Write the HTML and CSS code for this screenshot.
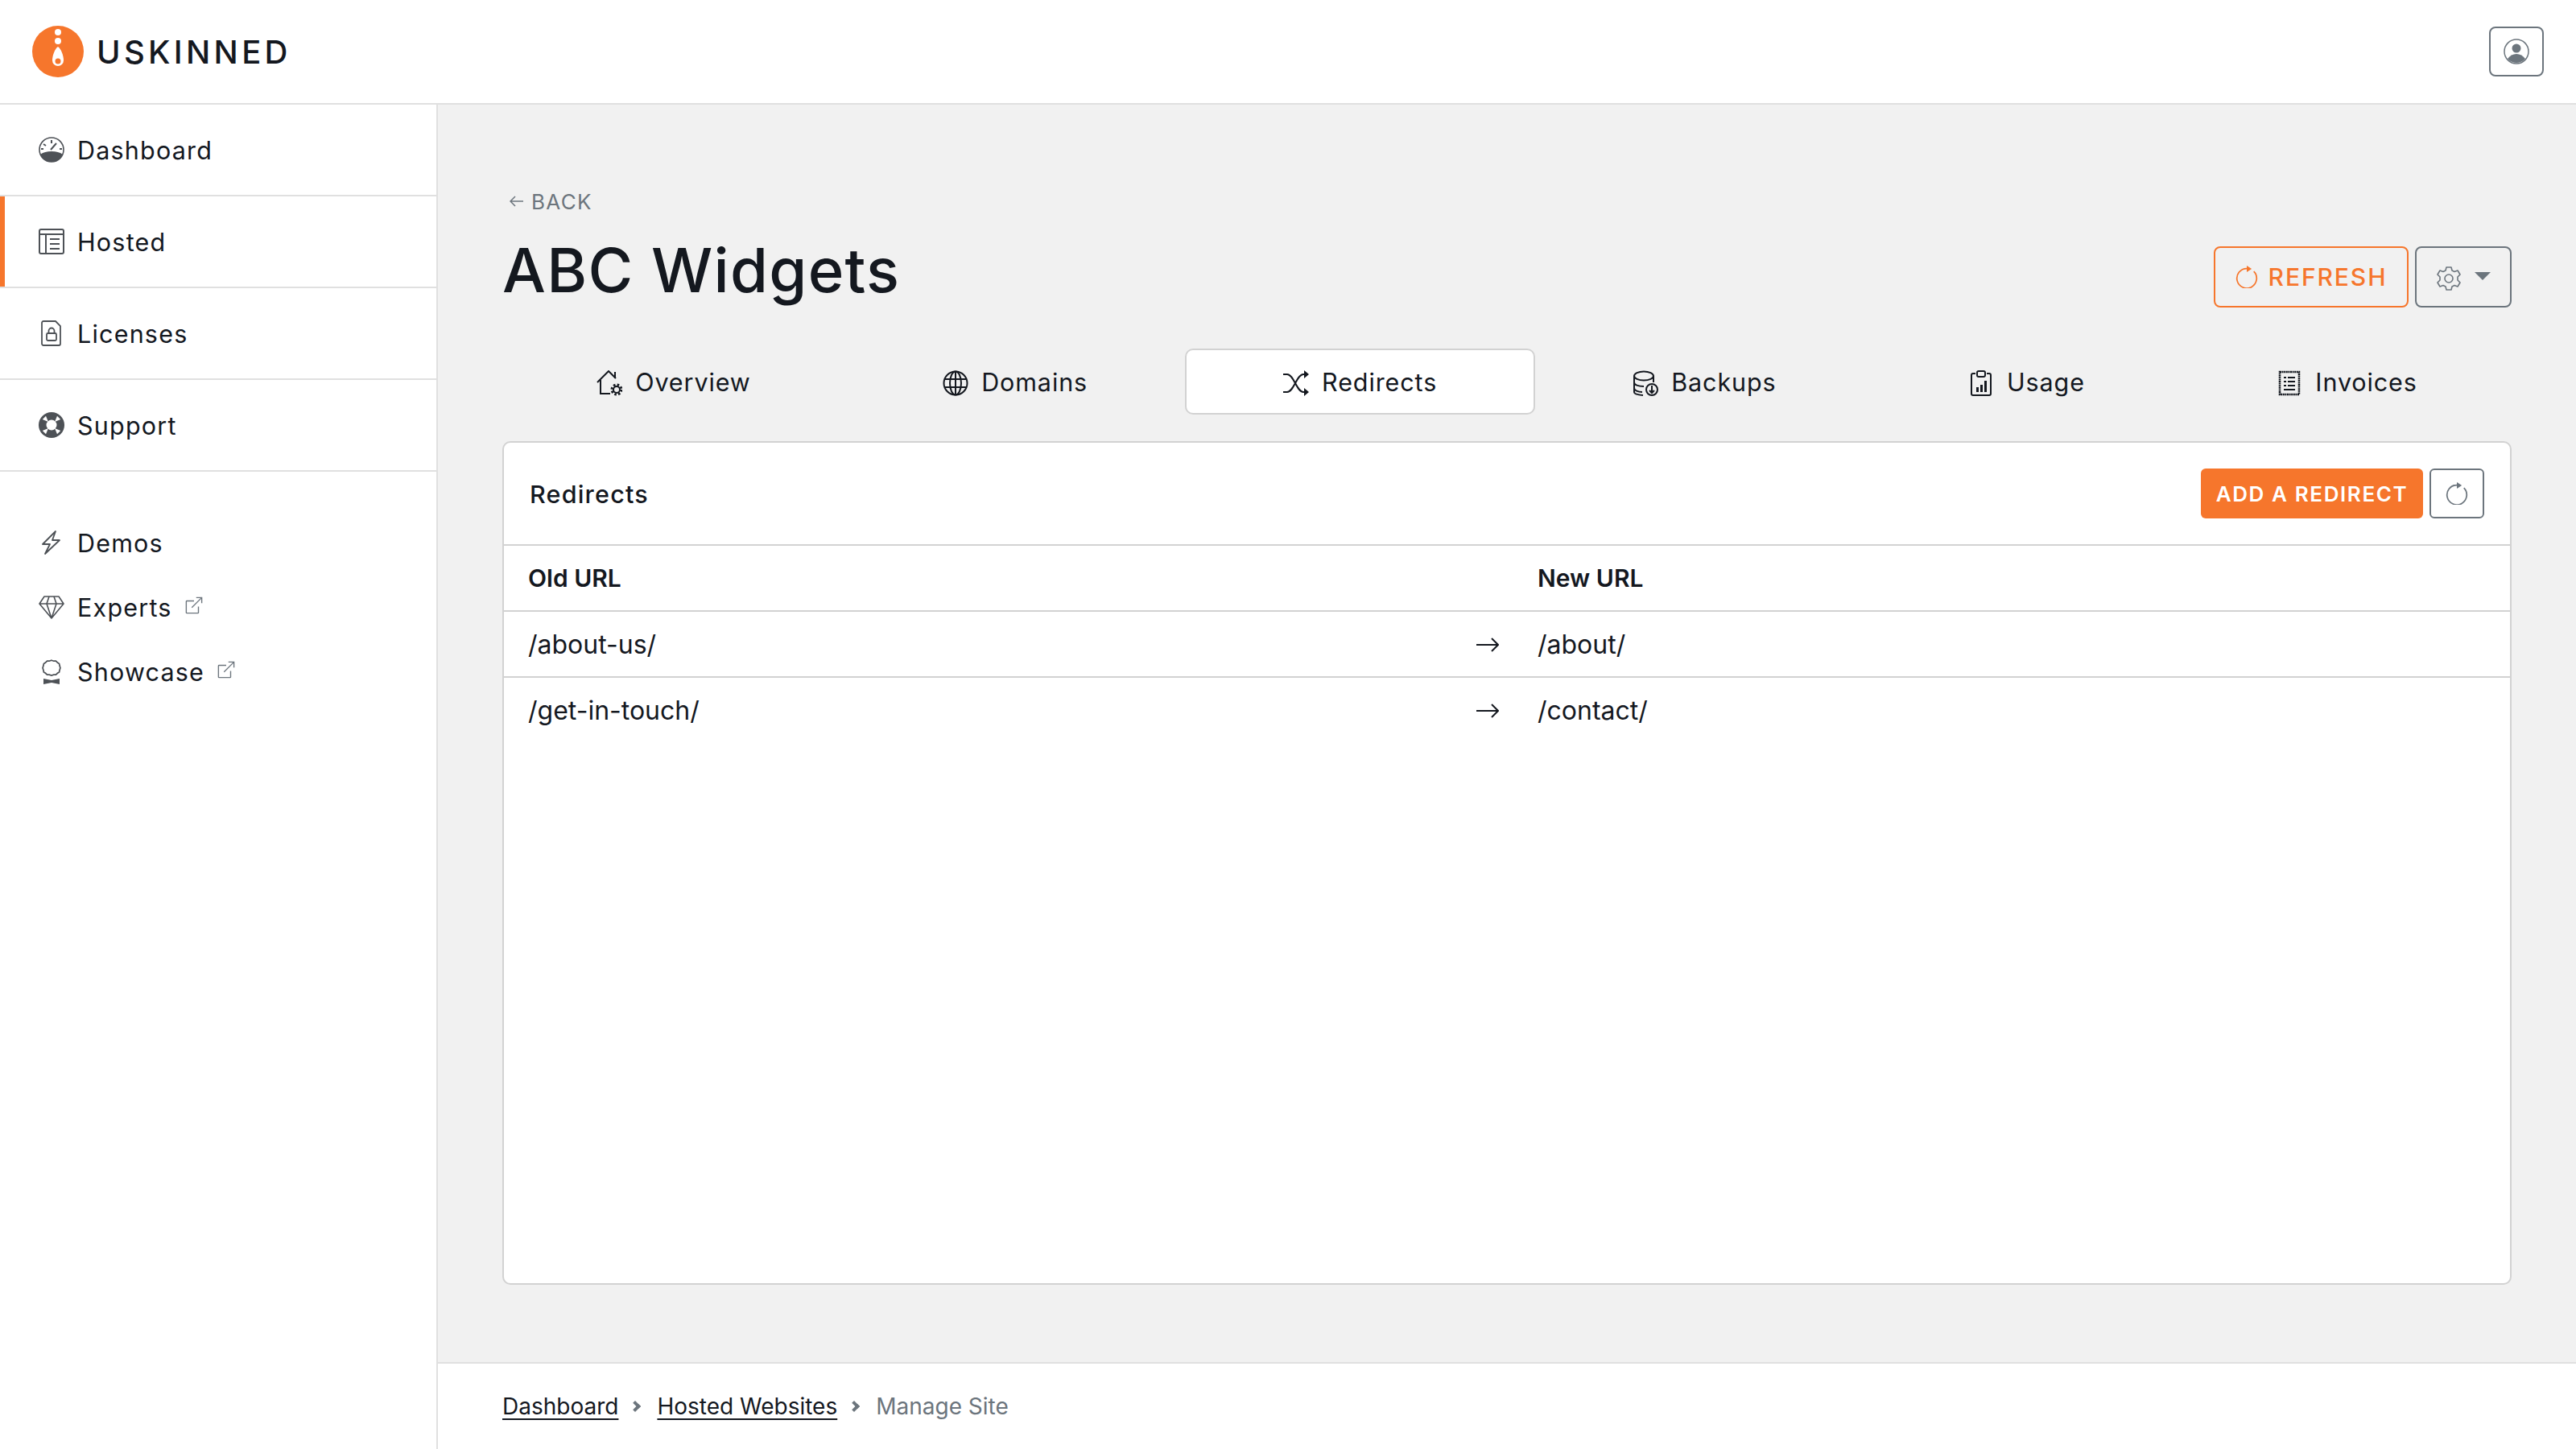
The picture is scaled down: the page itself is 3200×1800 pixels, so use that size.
FILE: index.html
```html
<!DOCTYPE html>
<html lang="en">
<head>
<meta charset="utf-8">
<title>ABC Widgets</title>
<link rel="stylesheet" href="styles.css">
</head>
<body>
<svg class="defs" width="0" height="0"><defs>
<symbol id="i-refresh" viewBox="0 0 16 16"><path d="M8 2A7 7 0 1 0 13 4.100" fill="none" stroke="currentColor" stroke-width="1"/><path d="M8 0v4.500l3.500-2.250z" fill="currentColor"/></symbol>
<symbol id="i-ext" viewBox="0 0 16 16"><path d="M8 4H1.500a.5.5 0 0 0-.5.5v10a.5.5 0 0 0 .5.5h10a.5.5 0 0 0 .5-.5V9" fill="none" stroke="currentColor"/><path d="M6 10 15 1M10 1h5v5" fill="none" stroke="currentColor"/></symbol>
<symbol id="i-arrow" viewBox="0 0 28 18"><path d="M0 9h27M19 1l8 8-8 8" fill="none" stroke="currentColor" stroke-width="2"/></symbol>
</defs></svg>
<header class="topbar">
  <div class="brand">
    <svg class="logo" viewBox="0 0 64 64"><circle cx="32" cy="32" r="32" fill="#f6762c"/><circle cx="32" cy="8" r="4" fill="#fff"/><circle cx="32" cy="19" r="4" fill="#fff"/><path d="M32 26c4 3 7 11 7 17a7 7 0 0 1-14 0c0-6 3-14 7-17z" fill="#fff"/><circle cx="32" cy="44" r="3.500" fill="#f6762c"/></svg>
    <span class="brand-name">USKINNED</span>
  </div>
  <button class="user-btn"><svg viewBox="0 0 32 32" class="user-icon"><circle cx="16" cy="16" r="15" fill="none" stroke="#6c757d" stroke-width="1.500"/><circle cx="16" cy="12" r="5.500" fill="#6c757d"/><path d="M5 25c3-4 6.500-6 11-6s8 2 11 6c-3 3.500-7 5-11 5s-8-1.500-11-5z" fill="#6c757d"/></svg></button>
</header>
<div class="shell">
  <nav class="sidebar">
    <ul class="nav-main">
      <li class="nav-item"><svg class="nav-icon" viewBox="0 0 32 32"><circle cx="16" cy="16" r="15" fill="none" stroke="#4d5156" stroke-width="1.600"/><path d="M2 22c4-3 8-4 14-4s10 1 14 4c-2 5-8 9-14 9S4 27 2 22z" fill="#4d5156"/><path d="M16 4v4M6 9l3 2M3 15h3M26 15h3M15 16l7-8" stroke="#4d5156" stroke-width="2" fill="none"/></svg><span>Dashboard</span></li>
      <li class="nav-item active"><svg class="nav-icon" viewBox="0 0 32 32"><rect x="1" y="1" width="30" height="30" rx="2" fill="none" stroke="#4d5156" stroke-width="2"/><path d="M1 7h30M9 7v24M14 13h12M14 19h12M14 25h12" stroke="#4d5156" stroke-width="2" fill="none"/></svg><span>Hosted</span></li>
      <li class="nav-item"><svg class="nav-icon" viewBox="0 0 32 32"><path d="M6 1h15l6 6v22a2 2 0 0 1-2 2H6a2 2 0 0 1-2-2V3a2 2 0 0 1 2-2z" fill="none" stroke="#4d5156" stroke-width="1.800"/><rect x="10" y="16" width="12" height="9" rx="1.500" fill="none" stroke="#4d5156" stroke-width="1.800"/><path d="M12.500 16v-3a3.500 3.500 0 0 1 7 0v3" fill="none" stroke="#4d5156" stroke-width="1.800"/></svg><span>Licenses</span></li>
      <li class="nav-item"><svg class="nav-icon" viewBox="0 0 32 32"><circle cx="16" cy="16" r="16" fill="#4d5156"/><circle cx="16" cy="16" r="6.500" fill="#fff"/><path d="M12 12 4.800 9 9 4.800zM20 12l7.200-3L23 4.800zM12 20l-7.200 3L9 27.200zM20 20l7.200 3-4.200 4.200z" fill="#fff"/></svg><span>Support</span></li>
    </ul>
    <ul class="nav-sub">
      <li class="nav-link"><svg class="nav-icon" viewBox="0 0 32 32"><path d="M21 2 5 18h9l-6 12 18-17h-9z" fill="none" stroke="#4d5156" stroke-width="1.800" stroke-linejoin="round"/></svg><span>Demos</span></li>
      <li class="nav-link"><svg class="nav-icon" viewBox="0 0 32 32"><path d="M7 3h18l6 9-15 18L1 12z M1 12h30M10 12l6 18 6-18M10 12l3-9M22 12l-3-9" fill="none" stroke="#4d5156" stroke-width="1.600" stroke-linejoin="round"/></svg><span>Experts</span><svg class="ext"><use href="#i-ext"/></svg></li>
      <li class="nav-link"><svg class="nav-icon" viewBox="0 0 32 32"><path d="M16 1l3.500 1.200 3.500-.2 2.500 2.500 2.800 1.800.7 3.400 1 3.300-1 3.300-.7 3.400-2.800 1.800-2.500 2.500-3.500-.2-3.500 1.200-3.500-1.200-3.500.2-2.500-2.500-2.800-1.800-.7-3.400-1-3.300 1-3.300.7-3.400 2.800-1.800L9 2l3.500.2z" transform="translate(3.500 1.500) scale(.78)" fill="none" stroke="#4d5156" stroke-width="2.200"/><path d="M6 25l10 2 10-2v7l-10-2-10 2z" fill="#4d5156"/></svg><span>Showcase</span><svg class="ext"><use href="#i-ext"/></svg></li>
    </ul>
  </nav>
  <div class="main">
    <main class="content">
      <a class="back"><svg class="back-arrow" viewBox="0 0 17 14"><path d="M17 7H1M7 1 1 7l6 6" fill="none" stroke="currentColor" stroke-width="1.500"/></svg>BACK</a>
      <div class="title-row">
        <h1>ABC Widgets</h1>
        <div class="title-actions">
          <button class="btn-refresh"><svg class="btn-ico"><use href="#i-refresh"/></svg>REFRESH</button>
          <button class="btn-gear"><svg class="gear" viewBox="0 0 32 32"><path d="M13 2h6l1 4 3 1.500 4-1.500 3 5-3 3v4l3 3-3 5-4-1.500-3 1.500-1 4h-6l-1-4-3-1.500-4 1.500-3-5 3-3v-4l-3-3 3-5 4 1.500 3-1.500z" fill="none" stroke="#6c757d" stroke-width="1.600" stroke-linejoin="round"/><circle cx="16" cy="16" r="5" fill="none" stroke="#6c757d" stroke-width="1.600"/></svg><span class="caret"></span></button>
        </div>
      </div>
      <div class="tabs">
        <a class="tab"><svg class="tab-icon" viewBox="0 0 32 32"><path d="M1 15 15 1l9 9M23 2v8M5 12v17h12" fill="none" stroke="#14181f" stroke-width="2"/><circle cx="25" cy="24" r="6" fill="none" stroke="#14181f" stroke-width="3" stroke-dasharray="2.500 2.200"/><circle cx="25" cy="24" r="4" fill="none" stroke="#14181f" stroke-width="2"/></svg><span>Overview</span></a>
        <a class="tab"><svg class="tab-icon" viewBox="0 0 32 32"><circle cx="16" cy="16" r="14.500" fill="none" stroke="#14181f" stroke-width="2"/><ellipse cx="16" cy="16" rx="7" ry="14.500" fill="none" stroke="#14181f" stroke-width="2"/><path d="M16 2v28M2 11h28M2 21h28" stroke="#14181f" stroke-width="2"/></svg><span>Domains</span></a>
        <a class="tab tab-active"><svg class="tab-icon" viewBox="0 0 32 32"><path d="M0 5h5c8 0 12 22 20 22h3M0 27h5c8 0 12-22 20-22h3" fill="none" stroke="#14181f" stroke-width="2"/><path d="M26 0l6 5-6 5zM26 22l6 5-6 5z" fill="#14181f"/></svg><span>Redirects</span></a>
        <a class="tab"><svg class="tab-icon" viewBox="0 0 32 32"><ellipse cx="14" cy="7" rx="12" ry="5.500" fill="none" stroke="#14181f" stroke-width="2"/><path d="M2 7v20c0 2 4 3.500 11 4M26 7v8M2 15c0 3 5 5 12 5M2 22c0 3 5 5 10 5" fill="none" stroke="#14181f" stroke-width="2"/><circle cx="24" cy="24" r="7" fill="none" stroke="#14181f" stroke-width="2"/><path d="M24 19v9M21 25l3 3 3-3" fill="none" stroke="#14181f" stroke-width="2"/></svg><span>Backups</span></a>
        <a class="tab"><svg class="tab-icon" viewBox="0 0 32 32"><path d="M9 4H6a2 2 0 0 0-2 2v23a2 2 0 0 0 2 2h20a2 2 0 0 0 2-2V6a2 2 0 0 0-2-2h-3" fill="none" stroke="#14181f" stroke-width="2"/><rect x="11" y="1" width="10" height="7" rx="2" fill="none" stroke="#14181f" stroke-width="2"/><path d="M10 21h3v6h-3zM15 18h3v9h-3zM20 13h3v14h-3z" fill="#14181f"/></svg><span>Usage</span></a>
        <a class="tab"><svg class="tab-icon" viewBox="0 0 32 32"><rect x="4" y="2" width="24" height="28" fill="none" stroke="#14181f" stroke-width="2.500" stroke-dasharray="2 .6"/><path d="M9 9h3M14 9h9M9 14h3M14 14h9M9 19h3M14 19h9M9 24h14" stroke="#14181f" stroke-width="2"/></svg><span>Invoices</span></a>
      </div>
      <section class="card">
        <div class="card-head">
          <h2>Redirects</h2>
          <div class="card-actions">
            <button class="btn-add">ADD A REDIRECT</button>
            <button class="btn-reload"><svg class="btn-ico"><use href="#i-refresh"/></svg></button>
          </div>
        </div>
        <div class="row row-head"><span class="col-old">Old URL</span><span class="col-arrow"></span><span class="col-new">New URL</span></div>
        <div class="row"><span class="col-old">/about-us/</span><span class="col-arrow"><svg class="arrow"><use href="#i-arrow"/></svg></span><span class="col-new">/about/</span></div>
        <div class="row row-last"><span class="col-old">/get-in-touch/</span><span class="col-arrow"><svg class="arrow"><use href="#i-arrow"/></svg></span><span class="col-new">/contact/</span></div>
      </section>
    </main>
    <footer class="crumbs">
      <a>Dashboard</a><span class="sep"></span><a>Hosted Websites</a><span class="sep"></span><span class="current">Manage Site</span>
    </footer>
  </div>
</div>
</body>
</html>
```
FILE: styles.css
```css
* { box-sizing: border-box; }
html, body { margin: 0; height: 100%; }
body { width: 3200px; height: 1800px; overflow: hidden; background: #fff; color: #14181f; font-family: "Inter", "Liberation Sans", sans-serif; display: flex; flex-direction: column; }
.defs { position: absolute; }
button { font-family: inherit; cursor: pointer; background: none; padding: 0; }
ul { list-style: none; margin: 0; padding: 0; }
.topbar { height: 130px; flex: none; display: flex; align-items: center; justify-content: space-between; padding: 0 40px; border-bottom: 2px solid #e0e0e0; }
.brand { display: flex; align-items: center; gap: 16px; }
.logo { width: 64px; height: 64px; }
.brand-name { font-size: 40px; font-weight: 500; letter-spacing: 4.300px; }
.user-btn { width: 68px; height: 62px; border: 2px solid #6c757d; border-radius: 8px; display: flex; align-items: center; justify-content: center; }
.user-icon { width: 32px; height: 32px; }
.shell { flex: 1; display: flex; min-height: 0; }
.sidebar { width: 544px; flex: none; border-right: 2px solid #e0e0e0; }
.nav-item { height: 114px; display: flex; align-items: center; gap: 16px; padding-left: 48px; font-size: 30.500px; letter-spacing: 1.200px; border-bottom: 2px solid #e0e0e0; }
.nav-item.active { box-shadow: inset 6px 0 0 #f6762c; }
.nav-icon { width: 32px; height: 32px; flex: none; }
.nav-sub { padding-top: 48px; }
.nav-link { height: 80px; display: flex; align-items: center; gap: 16px; padding-left: 48px; font-size: 30.500px; letter-spacing: 1.200px; }
.ext { width: 22px; height: 22px; color: #6c757d; margin-bottom: 4px; }
.main { flex: 1; min-width: 0; display: flex; flex-direction: column; background: #f1f1f1; }
.content { flex: 1; min-height: 0; padding: 105px 80px 0 80px; }
.back { display: flex; align-items: center; gap: 10px; height: 30px; padding-left: 9px; font-size: 26px; letter-spacing: 1.300px; color: #6c757d; }
.back-arrow { width: 17px; height: 14px; }
.title-row { display: flex; align-items: center; justify-content: space-between; height: 100px; margin-top: 20px; }
h1 { margin: 0; font-size: 76px; font-weight: 500; line-height: 1; letter-spacing: 1.300px; }
.title-actions { display: flex; gap: 8px; margin-top: 18px; }
.btn-refresh { width: 242px; height: 76px; border: 2px solid #f6762c; border-radius: 8px; display: flex; align-items: center; justify-content: center; gap: 13px; color: #f6762c; font-size: 30px; letter-spacing: 1.900px; font-weight: 500; }
.btn-ico { width: 28px; height: 28px; }
.btn-gear { width: 120px; height: 76px; border: 2px solid #6c757d; border-radius: 8px; display: flex; align-items: center; justify-content: center; gap: 16px; }
.gear { width: 32px; height: 32px; margin-top: 4px; }
.caret { width: 0; height: 0; border: 10px solid transparent; border-top: 10px solid #6c757d; border-bottom: 0; margin-bottom: 2px; }
.tabs { display: flex; gap: 4px; height: 82px; margin-top: 48px; }
.tab { flex: 1 1 auto; display: flex; align-items: center; justify-content: center; gap: 16px; font-size: 30.500px; letter-spacing: .9px; border: 2px solid transparent; border-radius: 10px; }
.tab-active { flex-grow: 1.04; background: #fff; border-color: #d2d2d2; }
.tab-icon { width: 32px; height: 32px; margin-top: 4px; }
.card { height: 1048px; margin-top: 33px; background: #fff; border: 2px solid #d2d2d2; border-radius: 10px; }
.card-head { height: 128px; display: flex; align-items: center; justify-content: space-between; padding: 0 32px; border-bottom: 2px solid #d2d2d2; }
h2 { margin: 0; font-size: 30.500px; font-weight: 500; letter-spacing: 1.200px; }
.card-actions { display: flex; gap: 8px; }
.btn-add { width: 276px; height: 62px; border: 0; border-radius: 6px; background: #f6762c; color: #fff; font-size: 26px; font-weight: 600; letter-spacing: 1.600px; }
.btn-reload { width: 68px; height: 62px; border: 2px solid #6c757d; border-radius: 6px; display: flex; align-items: center; justify-content: center; color: #6c757d; }
.row { height: 82px; display: flex; align-items: center; padding: 0 30px; font-size: 32px; border-bottom: 2px solid #d2d2d2; }
.row-last { border-bottom-color: transparent; }
.row-head { font-weight: 600; font-size: 30px; }
.col-old { width: 1178px; }
.col-arrow { width: 76px; display: flex; align-items: center; }
.arrow { width: 28px; height: 18px; margin-top: 2px; }
.col-new { flex: 1; }
.crumbs { height: 108px; flex: none; background: #fff; border-top: 2px solid #e0e0e0; display: flex; align-items: center; padding-left: 80px; font-size: 28px; }
.crumbs a { text-decoration: underline; text-underline-offset: 5px; }
.sep { width: 10px; height: 10px; margin: 0 22px 0 16px; border-top: 4px solid #6c757d; border-right: 4px solid #6c757d; transform: rotate(45deg); }
.current { color: #6c757d; }
```
